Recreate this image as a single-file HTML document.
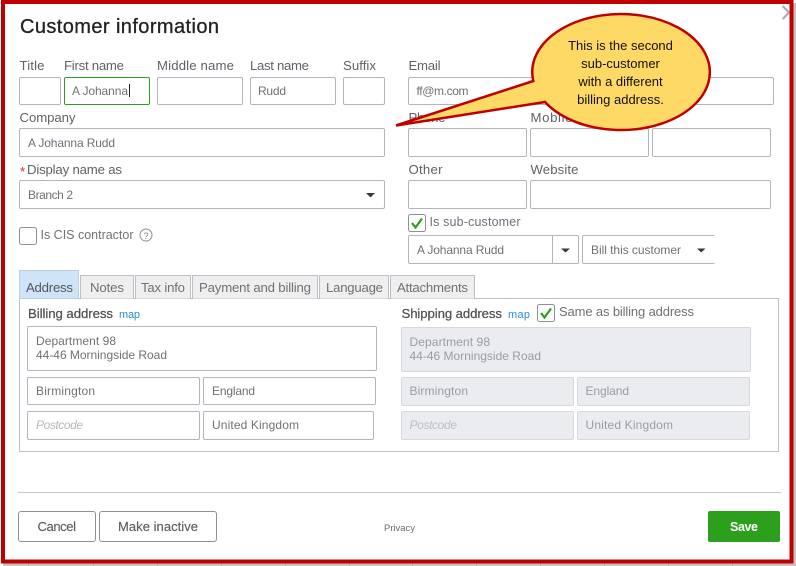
<!DOCTYPE html>
<html><head><meta charset="utf-8"><style>
html,body{margin:0;padding:0;background:#fff;width:796px;height:566px;overflow:hidden}
svg{display:block;filter:blur(.3px)}
text{font-family:"Liberation Sans",sans-serif;font-size:12px;fill:#6b6c72;white-space:pre}
.l{font-size:13.2px;fill:#606266}
.v{font-size:12px;fill:#707176}
.d{font-size:12px;fill:#9a9ca1}
.f{fill:#fff;stroke:#b0b5bf;stroke-width:1}
.g{fill:#ebecef;stroke:#d6d8dd;stroke-width:1}
.t{fill:#efefef;stroke:#bcbfc5;stroke-width:1}
.b{font-size:13.2px;fill:#505155;stroke:#505155;stroke-width:.25}
.c{font-size:13px;fill:#111;text-anchor:middle}
</style></head><body>
<svg width="796" height="566" viewBox="0 0 796 566" xmlns="http://www.w3.org/2000/svg">
<rect width="796" height="566" fill="#fff"/>
<rect x="3" y="563" width="790" height="3" fill="#c4c4c4"/>
<rect x="793" y="3" width="3" height="563" fill="#c4c4c4"/>
<path d="M28.5 563V566M93.5 563V566M157.5 563V566M221.5 563V566M285.5 563V566M349.5 563V566M412.5 563V566M476.5 563V566M540.5 563V566M604.5 563V566M668.5 563V566M732.5 563V566" stroke="#aaa" fill="none"/>
<path d="M782.700 6L789 12.500L782.700 19" fill="none" stroke="#a8a8a8" stroke-width="2"/>

<text x="20" y="33" style="font-size:20px;fill:#222;stroke:#222;stroke-width:.3" textLength="199">Customer information</text>

<text class="l" x="19.5" y="70" textLength="25">Title</text>
<text class="l" x="64" y="70" textLength="60">First name</text>
<text class="l" x="157" y="70" textLength="77">Middle name</text>
<text class="l" x="250" y="70" textLength="59">Last name</text>
<text class="l" x="343" y="70" textLength="33">Suffix</text>
<rect class="f" x="19.5" y="77.5" width="41" height="27" rx="1.5"/>
<rect x="64.5" y="77.5" width="85" height="27" rx="1.5" fill="#fff" stroke="#2ca01c"/>
<rect class="f" x="157.5" y="77.5" width="85" height="27" rx="1.5"/>
<rect class="f" x="250.5" y="77.5" width="85" height="27" rx="1.5"/>
<rect class="f" x="343.5" y="77.5" width="41" height="27" rx="1.5"/>
<text class="v" x="72" y="95" textLength="56">A Johanna</text>
<path d="M129.5 84V97" stroke="#222"/>
<text class="v" x="258" y="95" textLength="28">Rudd</text>

<text class="l" x="19.5" y="122" textLength="56">Company</text>
<rect class="f" x="19.5" y="128.5" width="365" height="28" rx="1.5"/>
<text class="v" x="28" y="147" textLength="87">A Johanna Rudd</text>
<text x="20" y="176" style="font-size:13px;fill:#d52b1e">*</text>
<text class="l" x="27" y="174" textLength="95">Display name as</text>
<rect class="f" x="19.5" y="180.5" width="365" height="28" rx="1.5"/>
<text class="v" x="28" y="199" textLength="45">Branch 2</text>
<path d="M366 193H375L370.500 197.500Z" fill="#393a3d"/>

<rect x="19.5" y="227.500" width="17" height="17" rx="2" fill="#fff" stroke="#8d9096"/>
<text class="v" x="40.500" y="239" style="font-size:12.500px" textLength="93">Is CIS contractor</text>
<circle cx="146" cy="235" r="6" fill="#fff" stroke="#8d9096" stroke-width="1"/>
<text x="146" y="239" text-anchor="middle" style="font-size:9.500px;fill:#7d7f85">?</text>

<text class="l" x="408.500" y="70" textLength="32">Email</text>
<rect class="f" x="408.500" y="77.500" width="365" height="27" rx="1.500"/>
<text class="v" x="416.500" y="95" textLength="52">ff@m.com</text>
<text class="l" x="408.500" y="122" textLength="37">Phone</text>
<text class="l" x="530.500" y="122" textLength="42">Mobile</text>
<rect class="f" x="408.500" y="128.500" width="118" height="28" rx="1.500"/>
<rect class="f" x="530.500" y="128.500" width="118" height="28" rx="1.500"/>
<rect class="f" x="652.500" y="128.500" width="118" height="28" rx="1.500"/>
<text class="l" x="408.500" y="174" textLength="34">Other</text>
<text class="l" x="530.500" y="174" textLength="48">Website</text>
<rect class="f" x="408.500" y="180.500" width="118" height="28" rx="1.500"/>
<rect class="f" x="530.500" y="180.500" width="240" height="28" rx="1.500"/>

<rect x="408.500" y="214.500" width="17" height="17" rx="2" fill="#fff" stroke="#8d9096"/>
<path d="M412 223L415.500 227.500L422 218.500" fill="none" stroke="#2ca01c" stroke-width="2.200"/>
<text class="v" x="429.500" y="226" style="font-size:12.500px" textLength="91">Is sub-customer</text>
<rect class="f" x="408.500" y="235.500" width="170" height="28" rx="1.500"/>
<path d="M552.500 236V263" stroke="#b0b5bf"/>
<text class="v" x="417" y="254" textLength="87">A Johanna Rudd</text>
<path d="M561 248.500H570L565.500 252.500Z" fill="#393a3d"/>
<path d="M714.500 235.500H584a1.500 1.500 0 0 0-1.500 1.500V262a1.500 1.500 0 0 0 1.500 1.500H714.500" fill="#fff" stroke="#b0b5bf"/>
<text class="v" x="591" y="254" textLength="90">Bill this customer</text>
<path d="M697 248.500H705.500L701.200 252.500Z" fill="#393a3d"/>

<rect x="19.500" y="298.500" width="759" height="153" fill="#fff" stroke="#bcbfc5"/>
<rect x="19.500" y="270.500" width="59" height="28" fill="#cfe4f8" stroke="#bcd0e2"/>
<path class="t" d="M80.500 298.500V275.500H133.500V298.500"/>
<path class="t" d="M135.500 298.500V275.500H190.500V298.500"/>
<path class="t" d="M192.500 298.500V275.500H317.500V298.500"/>
<path class="t" d="M319.500 298.500V275.500H388.500V298.500"/>
<path class="t" d="M390.500 298.500V275.500H474.500V298.500"/>
<text class="v" x="26" y="292" style="font-size:13.200px;fill:#55575b" textLength="47">Address</text>
<text class="v" x="90" y="292" style="font-size:13.200px" textLength="34">Notes</text>
<text class="v" x="141" y="292" style="font-size:13.200px" textLength="44">Tax info</text>
<text class="v" x="199" y="292" style="font-size:13.200px" textLength="112">Payment and billing</text>
<text class="v" x="326" y="292" style="font-size:13.200px" textLength="57">Language</text>
<text class="v" x="397" y="292" style="font-size:13.200px" textLength="71">Attachments</text>

<text class="b" x="28" y="318" textLength="85">Billing address</text>
<text x="119" y="318" style="font-size:11px;fill:#2b8fd6" textLength="21">map</text>
<rect class="f" x="27.500" y="326.500" width="349" height="44" rx="1.500"/>
<text class="v" x="36" y="345" textLength="80">Department 98</text>
<text class="v" x="36" y="359" textLength="131">44-46 Morningside Road</text>
<rect class="f" x="27.500" y="377.500" width="172" height="27" rx="1.500"/>
<rect class="f" x="203.500" y="377.500" width="172" height="27" rx="1.500"/>
<text class="v" x="36" y="395" textLength="59">Birmington</text>
<text class="v" x="212" y="395" textLength="43">England</text>
<rect class="f" x="27.500" y="411.500" width="172" height="28" rx="1.500"/>
<rect class="f" x="203.500" y="411.500" width="170" height="28" rx="1.500"/>
<text class="v" x="36" y="429" style="font-style:italic;fill:#b6b8bc" textLength="47">Postcode</text>
<text class="v" x="212" y="429" textLength="87">United Kingdom</text>

<text class="b" x="401.500" y="318" textLength="100.500">Shipping address</text>
<text x="508" y="318" style="font-size:11px;fill:#2b8fd6" textLength="22">map</text>
<rect x="537.500" y="304.500" width="17" height="17" rx="2" fill="#fff" stroke="#8d9096"/>
<path d="M541 313L544.500 317.500L551 308.500" fill="none" stroke="#2ca01c" stroke-width="2.200"/>
<text class="v" x="559" y="316" style="font-size:13px" textLength="135">Same as billing address</text>
<rect class="g" x="401.500" y="327.500" width="349" height="44" rx="1.500"/>
<text class="d" x="409.500" y="346" textLength="80.500">Department 98</text>
<text class="d" x="409.500" y="360" textLength="131.500">44-46 Morningside Road</text>
<rect class="g" x="401.500" y="377.500" width="172" height="28" rx="1.500"/>
<rect class="g" x="577.500" y="377.500" width="172" height="28" rx="1.500"/>
<text class="d" x="409.500" y="395" textLength="58.500">Birmington</text>
<text class="d" x="585.500" y="395" textLength="43.500">England</text>
<rect class="g" x="401.500" y="411.500" width="172" height="28" rx="1.500"/>
<rect class="g" x="577.500" y="411.500" width="172" height="28" rx="1.500"/>
<text class="d" x="409.500" y="429" style="font-style:italic;fill:#bdbfc4" textLength="47.500">Postcode</text>
<text class="d" x="585.500" y="429" textLength="87.500">United Kingdom</text>

<path d="M18 492.500H781" stroke="#c6c8cc"/>
<rect x="18.500" y="511.500" width="77" height="30" rx="2.500" fill="#fff" stroke="#8d9096"/>
<rect x="99.500" y="511.500" width="117" height="30" rx="2.500" fill="#fff" stroke="#8d9096"/>
<text x="37.500" y="531" style="font-size:13px;fill:#5b5d61;stroke:#5b5d61;stroke-width:.15" textLength="38.500">Cancel</text>
<text x="118" y="531" style="font-size:13px;fill:#5b5d61;stroke:#5b5d61;stroke-width:.15" textLength="80">Make inactive</text>
<text x="384" y="531" style="font-size:9.500px;fill:#6b6c72" textLength="31">Privacy</text>
<rect x="708" y="511" width="72" height="31" rx="2" fill="#2ca01c"/>
<text x="730" y="531" style="font-size:12.500px;font-weight:bold;fill:#fff" textLength="28">Save</text>

<path d="M533.300 81A88.800 58 0 1 1 545 102L396 125.500Z" fill="#ffd966" stroke="#c00000" stroke-width="2.500" stroke-linejoin="miter"/>
<text class="c" x="620.500" y="50">This is the second</text>
<text class="c" x="620.500" y="68">sub-customer</text>
<text class="c" x="620.500" y="86">with a different</text>
<text class="c" x="620.500" y="104">billing address.</text>

<path d="M3 2H791.500V561.500H3Z" fill="none" stroke="#c00000" stroke-width="4"/>
</svg>
</body></html>
